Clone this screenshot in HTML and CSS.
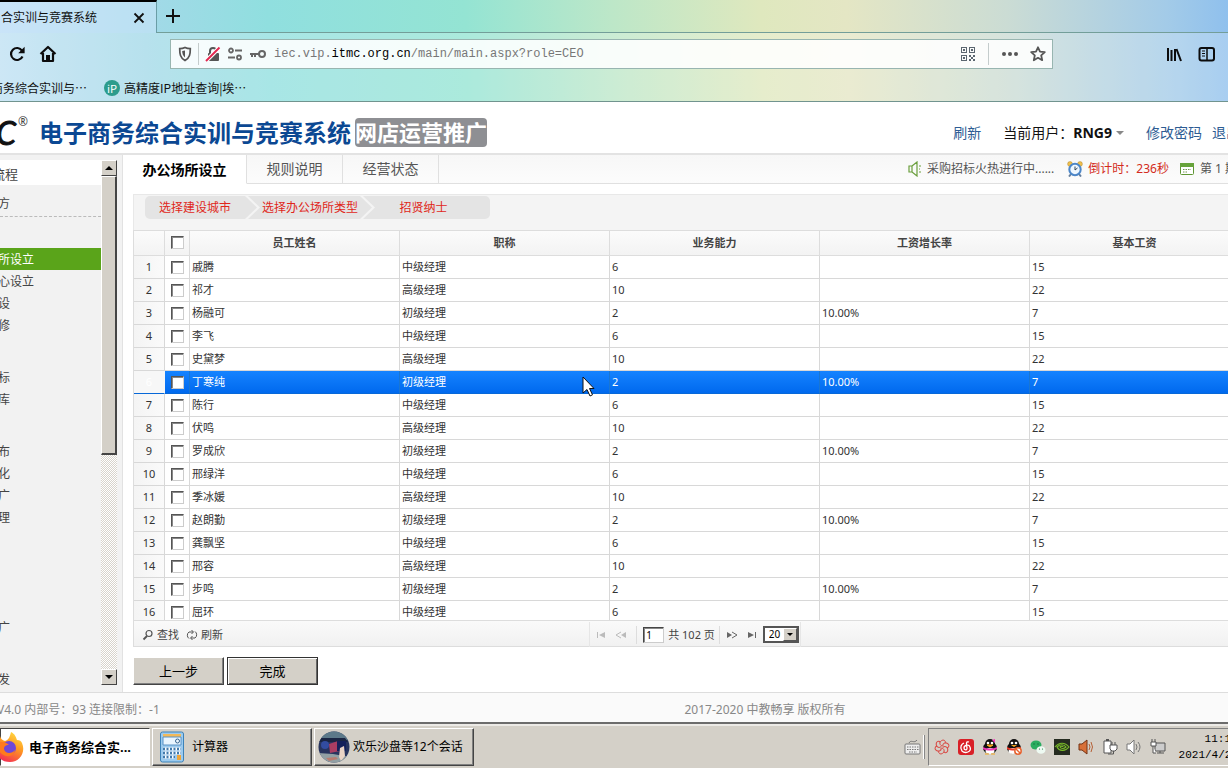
FILE: index.html
```html
<!DOCTYPE html>
<html lang="zh-CN">
<head>
<meta charset="utf-8">
<title>电子商务综合实训与竞赛系统</title>
<link rel="stylesheet" href="styles.css">
</head>
<body>
<div class="screen">
  <header class="chrome">
    <div class="tabstrip">
      <div class="browser-tab"><span class="tab-title">合实训与竞赛系统</span>
        <button class="plain" aria-label="关闭标签页"><svg width="12" height="12" viewBox="0 0 12 12"><path d="M1.500 1.500l9 9M10.500 1.500l-9 9" stroke="#111" stroke-width="1.8" fill="none"/></svg></button>
      </div>
      <div class="strip-rest"><button class="plain" aria-label="新标签页"><svg width="16" height="16" viewBox="0 0 16 16"><path d="M8 1v14M1 8h14" stroke="#111" stroke-width="2" fill="none"/></svg></button></div>
    </div>
    <div class="toolbar">
      <div class="nav-left">
        <button class="plain" aria-label="重新载入"><svg width="18" height="18" viewBox="0 0 18 18"><path d="M14.5 11.5A6 6 0 1 1 14 5.6" fill="none" stroke="#0c0c0d" stroke-width="2.2"/><path d="M16.6 1.8v6.4h-6.4z" fill="#0c0c0d"/></svg></button>
        <button class="plain" aria-label="主页"><svg width="18" height="18" viewBox="0 0 18 18"><path d="M1.5 9L9 2l7.500 7M4 8v8h10V8" fill="none" stroke="#0c0c0d" stroke-width="2.2" stroke-linejoin="round"/><path d="M7 16v-6h4v6z" fill="#0c0c0d"/></svg></button>
      </div>
      <div class="urlbar">
        <svg width="14" height="16" viewBox="0 0 14 16"><path d="M7 1.500c2 1 3.500 1.200 5.300 1.200 0 5-.4 9-5.300 11.800C2.100 11.700 1.700 7.700 1.700 2.700 3.500 2.700 5 2.500 7 1.500z" fill="none" stroke="#555" stroke-width="1.7"/><path d="M7 4.500v7C4.700 9.500 4.300 7.500 4.200 5z" fill="#555"/></svg>
        <i class="vline"></i>
        <svg width="16" height="16" viewBox="0 0 16 16"><path d="M5 8V5a3 3 0 0 1 6 0v3" fill="none" stroke="#555" stroke-width="2"/><rect x="3" y="7" width="11" height="8" rx="1" fill="#555"/><path d="M1.500 14.500L14.500 1.500" stroke="#fff" stroke-width="4"/><path d="M1 15L14.500 1.500" stroke="#e22850" stroke-width="2"/></svg>
        <svg width="16" height="16" viewBox="0 0 16 16"><g fill="none" stroke="#666" stroke-width="1.800"><circle cx="4" cy="4.500" r="2"/><path d="M8 4.500h7M1 11.500h7"/><circle cx="12" cy="11.500" r="2"/></g></svg>
        <svg width="18" height="16" viewBox="0 0 18 16"><g fill="none" stroke="#666" stroke-width="2"><circle cx="13" cy="8" r="3"/><path d="M10 8H1M3 8v3M6 8v3"/></g></svg>
        <div class="url" role="textbox" contenteditable="true" aria-label="地址" spellcheck="false">iec.vip.<span class="host">itmc.org.cn</span>/main/main.aspx?role=CEO</div>
        <svg width="16" height="16" viewBox="0 0 16 16" shape-rendering="crispEdges"><g fill="none" stroke="#5b6670"><path d="M1.500 1.500h5v5h-5zM9.500 1.500h5v5h-5zM1.500 9.500h5v5h-5z"/></g><path d="M3 3h2v2H3zM11 3h2v2h-2zM3 11h2v2H3zM9 9h2v2H9zM13 9h2v2h-2zM11 11h2v2h-2zM9 13h2v2H9zM13 13h2v2h-2z" fill="#5b6670"/></svg>
        <i class="vline wide"></i>
        <svg width="18" height="16" viewBox="0 0 18 16"><g fill="#555"><circle cx="3" cy="8" r="2"/><circle cx="9" cy="8" r="2"/><circle cx="15" cy="8" r="2"/></g></svg>
        <svg class="star" width="16" height="16" viewBox="0 0 16 16"><path d="M8 1.300l2 4.400 4.800.500-3.600 3.200 1 4.800L8 11.800l-4.200 2.400 1-4.800L1.200 6.200 6 5.700z" fill="none" stroke="#555" stroke-width="1.800" stroke-linejoin="round"/></svg>
      </div>
      <div class="nav-right">
        <svg width="16" height="16" viewBox="0 0 16 16"><path d="M2 2v13M5.500 4v11M9 3v12M10.500 3l4.500 12" stroke="#0c0c0d" stroke-width="2" fill="none"/></svg>
        <svg width="18" height="16" viewBox="0 0 18 16"><rect x="1.500" y="2" width="14.500" height="12.500" rx="2" fill="none" stroke="#0c0c0d" stroke-width="2"/><path d="M9 2v12" stroke="#0c0c0d" stroke-width="1.500"/><path d="M4 5h3M4 7.500h3M4 10h3" stroke="#0c0c0d"/></svg>
      </div>
    </div>
    <div class="bookmarks">
      <a href="#" class="bm-first">商务综合实训与…</a>
      <a href="#"><span class="ip">iP</span>高精度IP地址查询|埃…</a>
    </div>
  </header>

  <div class="site-head">
    <span class="mark">C<sup>®</sup></span>
    <h1>电子商务综合实训与竞赛系统</h1>
    <span class="badge">网店运营推广</span>
    <nav class="user-nav">
      <a href="#" class="refresh">刷新</a>
      <span class="user">当前用户：<b>RNG9</b><i class="tri"></i></span>
      <a href="#">修改密码</a>
      <a href="#">退出</a>
    </nav>
  </div>

  <div class="body">
    <aside class="side">
      <div class="menu">
        <h2>流程</h2>
        <p class="role">方</p>
        <ul>
          <li class="group"></li>
          <li class="on">所设立</li><li>心设立</li><li>设</li><li>修</li>
          <li class="group"></li>
          <li>标</li><li>库</li>
          <li class="group"></li>
          <li>布</li><li>化</li><li>广</li><li>理</li>
          <li class="group"></li>
          <li></li><li></li>
          <li class="last">广</li>
          <li class="group"></li>
          <li>发</li>
        </ul>
      </div>
      <div class="scroll">
        <button aria-label="向上滚动"><svg width="8" height="4" viewBox="0 0 8 4"><path d="M4 0l4 4H0z"/></svg></button>
        <div class="thumb"></div>
        <div class="track"></div>
        <button aria-label="向下滚动"><svg width="8" height="4" viewBox="0 0 8 4"><path d="M0 0h8L4 4z"/></svg></button>
      </div>
    </aside>

    <main>
      <div class="tabs">
        <button class="tab active">办公场所设立</button>
        <button class="tab">规则说明</button>
        <button class="tab">经营状态</button>
        <div class="status">
          <svg width="14" height="16" viewBox="0 0 14 16"><g fill="none" stroke="#6a9e3c" stroke-width="1.200"><path d="M1 5h3v6H1zM4 5l5-4v14l-5-4zM11 5h2M11 8h1M11 11h2"/></g></svg>
          <span class="news">采购招标火热进行中......</span>
          <svg class="clock" width="16" height="16" viewBox="0 0 16 16"><g fill="#f0c04c" stroke="#b18631" stroke-width=".5"><circle cx="3" cy="3" r="2.400"/><circle cx="13" cy="3" r="2.400"/></g><path d="M4 13l-2 2.500M12 13l2 2.500" stroke="#657e9b" stroke-width="2"/><circle cx="8" cy="8.500" r="5.700" fill="#eef7ff" stroke="#4c86c8" stroke-width="2"/><path d="M8 9V5.500M8 9l2.500-2" stroke="#345" fill="none"/></svg>
          <span class="count">倒计时：236秒</span>
          <svg class="cal" width="16" height="16" viewBox="0 0 16 16"><rect x="1.500" y="2.500" width="13" height="11" rx="1" fill="#fff" stroke="#5e9632"/><path d="M1 2h14v4H1z" fill="#67a33b"/><path d="M4 8.500h8M4 11h5" stroke="#70944f" stroke-dasharray="1.500 1"/></svg>
          <span>第 1 期</span>
        </div>
      </div>

      <section class="panel">
        <ol class="steps"><li class="s1">选择建设城市</li><li class="s2">选择办公场所类型</li><li class="s3">招贤纳士</li></ol>
        <div class="grid">
          <table>
            <colgroup><col class="c-num"><col class="c-ck"><col><col><col><col><col></colgroup>
            <thead><tr><th></th><th><input type="checkbox" aria-label="全选"></th><th>员工姓名</th><th>职称</th><th>业务能力</th><th>工资增长率</th><th>基本工资</th></tr></thead>
            <tbody>
              <tr><td>1</td><td><input type="checkbox" aria-label="戚腾"></td><td>戚腾</td><td>中级经理</td><td>6</td><td></td><td>15</td></tr>
              <tr><td>2</td><td><input type="checkbox" aria-label="祁才"></td><td>祁才</td><td>高级经理</td><td>10</td><td></td><td>22</td></tr>
              <tr><td>3</td><td><input type="checkbox" aria-label="杨融可"></td><td>杨融可</td><td>初级经理</td><td>2</td><td>10.00%</td><td>7</td></tr>
              <tr><td>4</td><td><input type="checkbox" aria-label="李飞"></td><td>李飞</td><td>中级经理</td><td>6</td><td></td><td>15</td></tr>
              <tr><td>5</td><td><input type="checkbox" aria-label="史黛梦"></td><td>史黛梦</td><td>高级经理</td><td>10</td><td></td><td>22</td></tr>
              <tr class="hover"><td>6</td><td><input type="checkbox" aria-label="丁寒纯"></td><td>丁寒纯</td><td>初级经理</td><td>2</td><td>10.00%</td><td>7</td></tr>
              <tr><td>7</td><td><input type="checkbox" aria-label="陈行"></td><td>陈行</td><td>中级经理</td><td>6</td><td></td><td>15</td></tr>
              <tr><td>8</td><td><input type="checkbox" aria-label="伏鸣"></td><td>伏鸣</td><td>高级经理</td><td>10</td><td></td><td>22</td></tr>
              <tr><td>9</td><td><input type="checkbox" aria-label="罗成欣"></td><td>罗成欣</td><td>初级经理</td><td>2</td><td>10.00%</td><td>7</td></tr>
              <tr><td>10</td><td><input type="checkbox" aria-label="邢绿洋"></td><td>邢绿洋</td><td>中级经理</td><td>6</td><td></td><td>15</td></tr>
              <tr><td>11</td><td><input type="checkbox" aria-label="季冰媛"></td><td>季冰媛</td><td>高级经理</td><td>10</td><td></td><td>22</td></tr>
              <tr><td>12</td><td><input type="checkbox" aria-label="赵朗勤"></td><td>赵朗勤</td><td>初级经理</td><td>2</td><td>10.00%</td><td>7</td></tr>
              <tr><td>13</td><td><input type="checkbox" aria-label="龚飘坚"></td><td>龚飘坚</td><td>中级经理</td><td>6</td><td></td><td>15</td></tr>
              <tr><td>14</td><td><input type="checkbox" aria-label="邢容"></td><td>邢容</td><td>高级经理</td><td>10</td><td></td><td>22</td></tr>
              <tr><td>15</td><td><input type="checkbox" aria-label="步鸣"></td><td>步鸣</td><td>初级经理</td><td>2</td><td>10.00%</td><td>7</td></tr>
              <tr><td>16</td><td><input type="checkbox" aria-label="屈环"></td><td>屈环</td><td>中级经理</td><td>6</td><td></td><td>15</td></tr>
            </tbody>
          </table>
        </div>
        <div class="pagebar"><div class="pagebar-in">
          <div class="tools">
            <button class="plain"><svg width="12" height="12" viewBox="0 0 12 12"><circle cx="7" cy="4.500" r="3" fill="none" stroke="#555" stroke-width="1.200"/><path d="M5 7l-3.500 3.500" stroke="#555" stroke-width="1.800"/></svg>查找</button>
            <button class="plain"><svg width="12" height="12" viewBox="0 0 12 12"><path d="M3 9.500A4 4 0 0 1 3 3h4M9 2.500A4 4 0 0 1 9 9H5M5.500 1l2 2-2 2M6.500 7l-2 2 2 2" fill="none" stroke="#555"/></svg>刷新</button>
          </div>
          <div class="pager">
            <button class="plain off" aria-label="首页"><svg width="10" height="8" viewBox="0 0 10 8"><path d="M1 1h1v6H1zM9 1v6L3 4z"/></svg></button>
            <button class="plain off" aria-label="上一页"><svg width="12" height="8" viewBox="0 0 12 8"><path d="M11 1v6L6 4z"/><path d="M6 1L1 4l5 3" fill="none" stroke="currentColor"/></svg></button>
            <i class="sep"></i>
            <input class="page" type="text" value="1" aria-label="页码">
            <span>共 102 页</span>
            <i class="sep"></i>
            <button class="plain" aria-label="下一页"><svg width="12" height="8" viewBox="0 0 12 8"><path d="M1 1v6l5-3z"/><path d="M6 1l5 3-5 3" fill="none" stroke="currentColor"/></svg></button>
            <button class="plain" aria-label="末页"><svg width="10" height="8" viewBox="0 0 10 8"><path d="M8 1h1v6H8zM1 1v6l6-3z"/></svg></button>
            <span class="pick"><select aria-label="每页条数"><option>20</option></select><i class="pick-btn"></i></span>
          </div>
        </div></div>
        <div class="actions"><button class="win">上一步</button><button class="win default">完成</button></div>
      </section>
    </main>
  </div>

  <footer class="foot"><div class="foot-in"><span>V4.0 内部号：93 连接限制：-1</span><span>2017-2020 中教畅享 版权所有</span></div></footer>

  <div class="taskbar">
    <button class="task current"><svg width="32" height="32" viewBox="0 0 32 32"><defs><linearGradient id="fx" x1=".8" y1="0" x2=".3" y2="1"><stop offset="0" stop-color="#ffe246"/><stop offset=".45" stop-color="#ff9822"/><stop offset="1" stop-color="#f42b55"/></linearGradient></defs><path d="M17 1c4 2 5 5 6 8 3 0 4 1 5 3 4 9-2 19-12 19S0 23 2 13l4-8c1 3 2 4 5 5 4-1 5-5 6-9z" fill="url(#fx)"/><circle cx="15" cy="17" r="7" fill="#7048d8"/><path d="M2 12c6-2 10-1 13 2-4 0-5 2-5 4 1 5 8 5 11 1-1 10-17 8-19-7z" fill="#ff7a1e"/></svg><span>电子商务综合实...</span></button>
    <button class="task"><svg width="24" height="32" viewBox="0 0 24 32"><rect x=".5" y="1" width="23" height="30" rx="2" fill="#9ccbef" stroke="#3d82b8"/><rect x="3" y="3" width="18" height="3" fill="#f2b959"/><path d="M3 6h18v8H3z" fill="#e9f5ff" stroke="#5b92c4"/><circle cx="17.500" cy="10" r="2" fill="none" stroke="#38658f"/><path d="M3 18h18M3 22h18M3 26h12" stroke="#fff" stroke-width="3"/><path d="M3 18h18M3 22h18M3 26h12" stroke="#427aac" stroke-width="2.500" stroke-dasharray="2 1.500"/><path d="M17 24h4v5h-4z" fill="#f0a638"/></svg><span>计算器</span></button>
    <button class="task"><svg width="32" height="32" viewBox="0 0 32 32"><clipPath id="av"><circle cx="16" cy="16" r="15.500"/></clipPath><g clip-path="url(#av)"><path d="M0 0h32v32H0z" fill="#27345e"/><path d="M0 0h32v9H0z" fill="#5c7989"/><path d="M3 7h24l3 4H1z" fill="#1a2543"/><circle cx="7" cy="14" r="4" fill="#324ca0"/><path d="M11 13l9-3 2 10-10 2z" fill="#a83d62"/><path d="M19 10h9v10h-9z" fill="#14205b"/><path d="M0 22l15 1 17 3v6H0z" fill="#91a0a4"/><path d="M22 17l4-2 1 10-4 5-2-4z" fill="#ead4c6"/><path d="M8 27l10-1 2 2-9 2z" fill="#b87c70"/></g></svg><span>欢乐沙盘等12个会话</span></button>
    <div class="tray-wrap">
      <svg width="18" height="16" viewBox="0 0 18 16"><rect x="1" y="5" width="15" height="10" rx="1" fill="#eee" stroke="#777"/><path d="M3 8h12M3 10.500h12M5 13h8" stroke="#777" stroke-dasharray="1.500 1"/><path d="M5 4c2-4 5 1 8-3" fill="none" stroke="#777"/></svg>
      <i class="grip"></i>
      <div class="tray">
        <svg width="16" height="16" viewBox="0 0 16 16"><g fill="none" stroke="#d94a45"><path id="pet" d="M8 7c-3-1-3-5 1-6 2 0 3 2 2 3"/><use href="#pet" transform="rotate(60 8 8)"/><use href="#pet" transform="rotate(120 8 8)"/><use href="#pet" transform="rotate(180 8 8)"/><use href="#pet" transform="rotate(240 8 8)"/><use href="#pet" transform="rotate(300 8 8)"/></g></svg>
        <svg width="16" height="16" viewBox="0 0 16 16"><rect width="16" height="16" rx="3" fill="#d92027"/><path d="M11 3c-3-1-3 2-2 6 0 3-3 2-3 0 0-3 5-4 6-1 2 5-5 7-8 4C1 8 4 5 6 4" fill="none" stroke="#fff" stroke-width="1.300"/></svg>
        <svg width="16" height="16" viewBox="0 0 16 16"><ellipse cx="8" cy="9" rx="7" ry="6" fill="#111"/><circle cx="8" cy="5" r="5" fill="#111"/><ellipse cx="8" cy="12" rx="4.500" ry="3" fill="#fff"/><path d="M1 8c4 2 10 2 14 0v2c-4 2-10 2-14 0z" fill="#f238b8"/><circle cx="6" cy="4" r="1.300" fill="#fff"/><circle cx="10" cy="4" r="1.300" fill="#fff"/><path d="M5 6h6l-3 2zM3 15h4M9 15h4" fill="#f5a51d" stroke="#f5a51d"/><path d="M10 1l3-1v4z" fill="#f238b8"/></svg>
        <svg width="16" height="16" viewBox="0 0 16 16"><ellipse cx="8" cy="9" rx="7" ry="6" fill="#111"/><circle cx="8" cy="5" r="5" fill="#111"/><ellipse cx="7" cy="12" rx="4.500" ry="3" fill="#fff"/><path d="M1 8c4 2 10 2 14 0v2c-4 2-10 2-14 0z" fill="#e93828"/><circle cx="6" cy="4" r="1.300" fill="#fff"/><circle cx="10" cy="4" r="1.300" fill="#fff"/><path d="M5 6h6l-3 2z" fill="#f5a51d"/><circle cx="12" cy="12" r="3.200" fill="#fff" stroke="#e7622e" stroke-width="1.500"/><path d="M10 10l4 4" stroke="#e7622e" stroke-width="1.500"/></svg>
        <svg width="16" height="16" viewBox="0 0 16 16"><ellipse cx="6" cy="6" rx="5.500" ry="4.500" fill="#2aad60"/><ellipse cx="11" cy="11" rx="4.500" ry="3.800" fill="#eefaf2"/><g fill="#146c3b"><circle cx="4" cy="5" r=".7"/><circle cx="8" cy="5" r=".7"/><circle cx="9.500" cy="10" r=".6"/><circle cx="12.500" cy="10" r=".6"/></g></svg>
        <svg width="16" height="16" viewBox="0 0 16 16"><path d="M0 0h16v16H0z" fill="#252b20"/><path d="M1 8c4-5 10-5 14 0-4 5-10 4-12 0 3-3 7-3 9 0-2 2-5 2-6 0 1-1 3-1 3 0" fill="none" stroke="#78b82a" stroke-width="1.200"/></svg>
        <svg width="16" height="16" viewBox="0 0 16 16"><path d="M1 5h3l5-4v14l-5-4H1z" fill="#d87038" stroke="#743213"/><path d="M11 5q2 3 0 6M13 3q3 5 0 10" fill="none" stroke="#b66036"/></svg>
        <svg width="16" height="16" viewBox="0 0 16 16"><path d="M2 2h7v12H2z" fill="#fff" stroke="#555"/><path d="M4 0h3v2H4z" fill="#555"/><path d="M8 6h7v4l-2 2h-3l-2-2z" fill="#fff" stroke="#555"/><path d="M10 6V3M13 6V3M11.500 12v3H6" stroke="#555" fill="none"/></svg>
        <svg width="16" height="16" viewBox="0 0 16 16"><path d="M1 5h3l4-4v14l-4-4H1z" fill="#fff" stroke="#777"/><path d="M10 5q2 3 0 6M12 3q4 5 0 10" fill="none" stroke="#777"/></svg>
        <svg width="16" height="16" viewBox="0 0 16 16"><path d="M5 4h10v8H5z" fill="#ccc" stroke="#555"/><path d="M7 14h7M10 12v2" stroke="#555"/><path d="M1 3h5v4H1zM3 7v7h3M2 0v3M5 0v3" fill="#fff" stroke="#555"/></svg>
        <div class="time"><span>11:1</span><span>2021/4/22</span></div>
      </div>
    </div>
  </div>
  <svg class="cursor" width="14" height="22" viewBox="0 0 14 22"><path d="M1 1v16l4-3.500 3 6.500 2.500-1.200-3-6.300H12z" fill="#fff" stroke="#111"/></svg>
</div>
</body>
</html>
```
FILE: styles.css
```css
* { box-sizing: border-box; }
body { margin: 0; font: 12px/16px "Noto Sans", "Noto Sans CJK SC", sans-serif; color: #444; background: #fff; }
button, input, select { font: inherit; color: inherit; }
a { text-decoration: none; color: #2d5c93; }
svg { flex: none; display: block; }
h1, h2, p, ul, ol { margin: 0; padding: 0; list-style: none; }
.plain { display: inline-flex; align-items: center; background: none; border: 0; padding: 0; }
.screen { position: relative; display: flex; flex-direction: column; height: 100vh; overflow: hidden; white-space: nowrap; }

/* Browser window */
.chrome { color: #111; border-bottom: 1px solid #71948f; background: linear-gradient(88deg, #bfe0f3 0%, #a3d9e8 12%, #90dfdf 22%, #94e4d3 38%, #bde7c8 50%, #dfe8be 62%, #e4e6c4 69%, #cbdcd4 82%, #a3cbe8 95%, #8fc0ed 100%); }
.tabstrip { display: flex; height: 33px; }
.browser-tab { display: flex; justify-content: space-between; align-items: center; width: 157px; padding: 0 11px 0 1px; border-top: 2px solid #000; border-right: 1px solid #6a9da6; background: rgba(215, 232, 255, .45); }
.strip-rest { flex: 1; display: flex; align-items: center; padding-left: 8px; border-bottom: 1px solid #739e99; }
.toolbar { display: flex; align-items: center; height: 41px; background: rgba(255, 255, 255, .22); }
.nav-left { display: flex; gap: 13px; width: 170px; padding-left: 8px; }
.urlbar { flex: 1; display: flex; align-items: center; gap: 6px; height: 30px; padding: 0 6px 0 7px; border: 1px solid #98b5b0; background: rgba(255, 255, 255, .88); }
.vline { width: 1px; height: 22px; background: #c4cccc; }
.vline.wide { margin: 0 6px; }
.url { flex: 1; padding-left: 1px; font: 12px/16px "Liberation Mono", monospace; color: #777; outline: 0; }
.host { color: #000; }
.star { margin-left: 5px; }
.nav-right { display: flex; gap: 16px; width: 175px; padding-left: 113px; }
.bookmarks { display: flex; align-items: center; gap: 17px; height: 27px; background: rgba(255, 255, 255, .22); font-family: "Noto Sans CJK SC", sans-serif; }
.bookmarks a { display: flex; align-items: center; gap: 4px; color: #111; }
.bm-first { margin-left: -9px; }
.ip { width: 16px; height: 16px; border-radius: 8px; background: #2c9c8c; color: #fff; font-size: 11px; line-height: 16px; text-align: center; }

/* Site header */
.site-head { display: flex; align-items: center; height: 53px; padding-top: 10px; border-bottom: 2px solid #e3e3e3; overflow: hidden; }
.mark { display: flex; align-items: center; width: 39px; margin-left: -4px; font: italic 32px/32px "Lato", sans-serif; color: #111; -webkit-text-stroke: 1px #111; }
.mark sup { align-self: flex-start; margin-left: 2px; font: 12px/10px "Noto Sans", sans-serif; color: #444; -webkit-text-stroke: 0; }
h1 { margin-left: 4px; font-size: 24px; line-height: 30px; color: #0b4893; }
.badge { margin-left: 4px; height: 29px; border-radius: 4px; background: #8e8f93; color: #fff; font-size: 22px; font-weight: bold; line-height: 28px; }
.user-nav { display: flex; gap: 10px; margin-left: auto; margin-right: -12px; font-size: 14px; line-height: 20px; }
.refresh { margin-right: 12px; }
.user { display: flex; align-items: center; margin-right: 12px; color: #111; }
.tri { margin-left: 4px; border: 4px solid transparent; border-top-color: #888; border-bottom: 0; }

.body { flex: 1; display: flex; min-height: 0; }
.side { display: flex; width: 123px; padding-top: 5px; background: #f2f2f2; border-right: 1px solid #e2e2e2; }
.menu { width: 101px; overflow: hidden; }
.menu h2 { height: 25px; margin-left: -8px; background: #fff; font-size: 13px; font-weight: normal; line-height: 28px; }
.role { height: 32px; padding-top: 11px; text-indent: -2px; border-bottom: 1px dashed #bbb; }
.menu ul { padding-top: 1px; }
.menu li { height: 22px; text-indent: -2px; line-height: 24px; }
.menu li.group { height: 30px; }
.menu li.on { background: #5aa41a; color: #fff; }
.menu li.last { margin-top: 14px; }
.scroll { display: flex; flex-direction: column; width: 16px; padding-bottom: 7px; }
.scroll button { display: flex; justify-content: center; align-items: center; width: 16px; height: 16px; padding: 0; background: #d4d0c8; border: 1px solid; border-color: #fff #444 #444 #fff; }
.thumb { flex: 277; background: #d4d0c8; border: 1px solid; border-color: #fff #444 #444 #fff; border-right-width: 2px; border-bottom-width: 2px; }
.track { flex: 215; background: repeating-conic-gradient(#d8d4cc 0 25%, #fff 0 50%) 0 0 / 2px 2px; }

main { flex: 1; display: flex; flex-direction: column; min-width: 0; overflow: hidden; }
.tabs { display: flex; height: 29px; background: linear-gradient(#f7f7f7, #fcfcfc); }
.tab { width: 96px; padding: 0; border: 0; border-right: 1px solid #e0e0e0; border-bottom: 1px solid #e0e0e0; background: none; font-size: 14px; line-height: 20px; color: #555; }
.tab.active { width: 124px; padding-top: 2px; background: #fff; border-bottom-color: #fff; font-weight: bold; color: #000; }
.status { flex: 1; display: flex; justify-content: flex-end; align-items: center; gap: 5px; margin-right: -9px; border-bottom: 1px solid #e0e0e0; color: #555; }
.clock { margin-left: 8px; }
.cal { margin-left: 5px; }
.count { color: #d32b20; }

.panel { flex: 1; display: flex; flex-direction: column; min-height: 0; padding: 10px 0 7px 10px; }
.steps { display: flex; padding: 1px 0 11px 11px; border: 1px solid #e8e8e8; border-width: 1px 0 0 1px; background: #f4f4f4; color: #e0271b; }
.steps li { height: 23px; background: #e4e4e4; line-height: 24px; text-align: center; }
.s1 { width: 112px; padding-right: 12px; border-radius: 5px 0 0 5px; clip-path: polygon(0 0, 100px 0, 100% 50%, 100px 100%, 0 100%); }
.steps .s2, .steps .s3 { margin-left: -9px; padding: 0 12px; clip-path: polygon(0 0, calc(100% - 12px) 0, 100% 50%, calc(100% - 12px) 100%, 0 100%, 12px 50%); }
.s2 { width: 124px; }
.s3 { width: 127px; border-radius: 0 5px 5px 0; }
.steps .s3 { padding: 0 6px 0 0; clip-path: polygon(0 0, 100% 0, 100% 100%, 0 100%, 12px 50%); }

/* Staff grid */
.grid { flex: 1; min-height: 0; overflow: hidden; border-left: 1px solid #ddd; }
table { width: calc(100% + 12px); table-layout: fixed; border-collapse: separate; border-spacing: 0; font-size: 11px; line-height: 16px; }
.c-num { width: 31px; }
.c-ck { width: 25px; }
th { height: 26px; padding: 0 0 1px; border: solid #ddd; border-width: 1px 1px 1px 0; background: linear-gradient(#fbfbfb, #f3f3f3); color: #444; }
td { height: 23px; padding: 0 2px; border: solid #d8d8d8; border-width: 0 1px 1px 0; color: #333; }
td:first-child { background: linear-gradient(90deg, #f4f4f4, #fafafa); text-align: center; }
td:nth-child(2) { text-align: center; }
td input, th input { appearance: none; display: block; width: 13px; height: 13px; margin: 0 auto; background: #fff; border: 1px solid; border-color: #555 #ccc #ccc #555; box-shadow: inset 1px 1px #888; }
.hover td { background: linear-gradient(#1583ff, #0069ee); border-right-color: #1976d2; border-bottom-color: #0768d8; color: #fff; }
.hover td:first-child { background: #f7f7f7; border-right-color: #f7f7f7; }
.pagebar { height: 27px; border: 1px solid #ddd; border-right: 0; background: linear-gradient(#fafafa, #f1f1f1); font-size: 11px; }
.pagebar-in { display: grid; grid-template-columns: 1fr auto 1fr; align-items: center; width: calc(100% + 28px); height: 27px; }
.tools { display: flex; gap: 7px; padding-left: 8px; }
.tools .plain { gap: 3px; }
.pager { display: flex; align-items: center; height: 25px; padding: 0 1px 0 6px; border-left: 1px solid #e6e6e6; border-right: 1px solid #e6e6e6; }
.pager .plain { margin-right: 9px; color: #666; fill: currentColor; }
.pager .plain.off { color: #bbb; }
.sep { width: 1px; height: 18px; margin-right: 6px; background: #ddd; }
.page { width: 21px; height: 16px; margin-right: 4px; padding: 0 0 0 2px; border: 1px solid; border-color: #444 #ccc #ccc #444; box-shadow: inset 1px 1px #888; background: #fff; font-size: 10px; color: #000; }
.pager span + .sep { margin-left: 4px; }
.pick { position: relative; display: block; margin-left: -3px; }
.pick select { appearance: none; display: block; width: 36px; height: 17px; padding: 0 0 0 4px; border: 2px solid #555; border-radius: 0; background: #fff; font-size: 10px; line-height: 13px; color: #000; }
.pick-btn { position: absolute; top: 2px; right: 2px; width: 14px; height: 13px; background: #d4d0c8; border: 1px solid; border-color: #fff #555 #555 #fff; pointer-events: none; }
.pick-btn::after { content: ""; display: block; margin: 4px auto 0; width: 0; border: solid transparent; border-width: 3px 3px 0; border-top-color: #000; box-sizing: content-box; }
.actions { display: flex; gap: 3px; padding-top: 10px; }
.win { width: 91px; height: 28px; padding: 0; border: 1px solid; border-color: #fff #444 #444 #fff; box-shadow: inset -1px -1px #808080; background: #d4d0c8; font-size: 13px; color: #000; }
.win.default { border-color: #333; box-shadow: inset 1px 1px #fff, inset -1px -1px #666; }

.foot { height: 30px; border-top: 1px solid #ddd; background: #fafafa; color: #888; overflow: hidden; }
.foot-in { display: grid; grid-template-columns: 1fr auto 1fr; align-items: center; width: calc(100% + 308px); height: 34px; margin-left: -3px; }

/* Desktop taskbar */
.taskbar { display: flex; gap: 2px; height: 46px; padding: 4px 0 3px; border-top: 2px solid #6c6c6c; background: #d4d0c8; box-shadow: inset 0 2px #eceae6; color: #000; }
.task { display: flex; align-items: center; gap: 3px; width: 160px; height: 38px; padding: 0 7px; border: 1px solid; border-color: #fff #444 #444 #fff; box-shadow: inset -1px -1px #808080; background: #d4d0c8; text-align: left; }
.task:nth-child(2) { gap: 8px; }
.task:nth-child(3) { padding-left: 3px; }
.task.current { width: 150px; padding: 0; background: #fff; border-color: #444 #fff #fff #444; font-size: 13px; font-weight: bold; box-shadow: none; }
.current svg { margin-left: -7px; }
.tray-wrap { display: flex; align-items: center; margin-left: auto; margin-right: -11px; }
.grip { width: 2px; height: 24px; margin: 0 3px 0 1px; background: #fff; border-right: 1px solid #888; }
.tray { display: flex; align-items: center; gap: 8px; height: 38px; padding-left: 5px; border: 1px solid; border-color: #808080 #fff #fff #808080; }
.time { width: 63px; margin-left: 1px; font: 11px/16px "Liberation Mono", monospace; text-align: right; }
.time span { display: block; }
.time span:first-child { padding-right: 7px; }
.cursor { position: absolute; left: 582px; top: 376px; }
```
